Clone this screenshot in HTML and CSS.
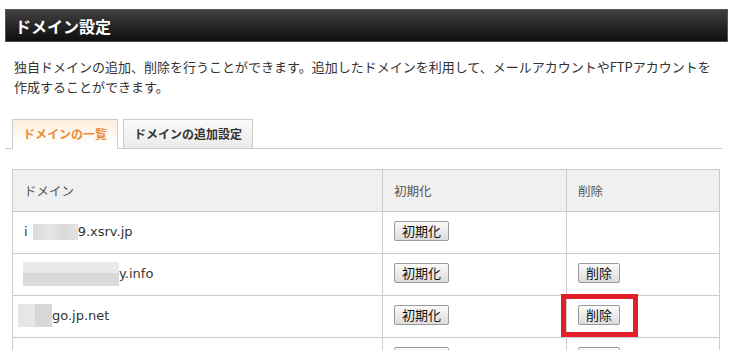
FILE: index.html
```html
<!DOCTYPE html>
<html lang="ja">
<head>
<meta charset="utf-8">
<title>ドメイン設定</title>
<link rel="stylesheet" href="styles.css">
</head>
<body>
<div class="page">
  <h1 class="title-bar">ドメイン設定</h1>
  <p class="desc">独自ドメインの追加、削除を行うことができます。追加したドメインを利用して、メールアカウントやFTPアカウントを作成することができます。</p>
  <div class="tabs">
    <div class="tab tab-active">ドメインの一覧</div>
    <div class="tab">ドメインの追加設定</div>
  </div>
  <table class="domains">
    <thead>
      <tr>
        <th class="col-domain">ドメイン</th>
        <th class="col-init">初期化</th>
        <th class="col-del">削除</th>
      </tr>
    </thead>
    <tbody>
      <tr>
        <td><div class="cell domain">i<span class="mask mask-1"></span>9.xsrv.jp</div></td>
        <td><div class="cell"><button class="btn btn-init">初期化</button></div></td>
        <td></td>
      </tr>
      <tr>
        <td><div class="cell domain"><span class="mask mask-2"></span>y.info</div></td>
        <td><div class="cell"><button class="btn btn-init">初期化</button></div></td>
        <td><div class="cell"><button class="btn btn-del">削除</button></div></td>
      </tr>
      <tr>
        <td><div class="cell domain"><span class="mask mask-3"></span>go.jp.net</div></td>
        <td><div class="cell"><button class="btn btn-init">初期化</button></div></td>
        <td class="marked"><div class="cell"><button class="btn btn-del">削除</button></div><span class="highlight"></span></td>
      </tr>
      <tr>
        <td></td>
        <td><div class="cell"><button class="btn btn-init">初期化</button></div></td>
        <td><div class="cell"><button class="btn btn-del">削除</button></div></td>
      </tr>
    </tbody>
  </table>
</div>
</body>
</html>
```
FILE: styles.css
```css
html, body {
  margin: 0;
  padding: 0;
  background: #ffffff;
}
body {
  font-family: "Noto Sans CJK JP", "DejaVu Sans", sans-serif;
  color: #333333;
  overflow: hidden;
}
.page {
  padding: 9px 0 0 0;
}
.title-bar {
  margin: 0 0 0 5px;
  width: 723px;
  height: 33px;
  box-sizing: border-box;
  padding-left: 9px;
  font-size: 16px;
  font-weight: bold;
  line-height: 32px;
  color: #ffffff;
  background: linear-gradient(#404040, #0e0e0e);
  border: 1px solid #555555;
}
.desc {
  margin: 15px 0 0 14px;
  width: 708px;
  font-size: 13px;
  line-height: 20px;
  color: #333333;
}
.tabs {
  display: flex;
  gap: 5px;
  margin: 22px 0 0 5px;
  padding-left: 7px;
  width: 710px;
  border-bottom: 1px solid #cccccc;
  height: 29px;
}
.tab {
  box-sizing: border-box;
  height: 29px;
  border: 1px solid #cccccc;
  border-bottom: none;
  font-size: 12px;
  font-weight: bold;
  line-height: 28px;
  text-align: center;
  color: #333333;
  background: linear-gradient(#fafafa, #ebebeb);
  width: 130px;
}
.tab-active {
  width: 106px;
  color: #e98d36;
  height: 30px;
  background: linear-gradient(#fdeedd, #ffffff 85%);
}
.domains {
  margin: 20px 0 0 12px;
  width: 707px;
  border-collapse: collapse;
  table-layout: fixed;
}
.domains th,
.domains td {
  border: 1px solid #cccccc;
  height: 41px;
  padding: 0 0 0 11px;
  text-align: left;
  vertical-align: middle;
  box-sizing: content-box;
}
.domains th {
  background: #f0f0f0;
  font-size: 12.5px;
  font-weight: normal;
  color: #555555;
}
.col-domain { width: 358px; }
.col-init { width: 172px; }
.col-del { width: 141px; }
.cell {
  display: flex;
  align-items: center;
  height: 41px;
}
.domain {
  font-family: "DejaVu Sans", "Noto Sans CJK JP", sans-serif;
  font-size: 13px;
  color: #333333;
  padding-bottom: 2px;
  box-sizing: border-box;
}
.mask {
  display: block;
  flex: none;
  background: linear-gradient(90deg, #dcdcdc, #e6e6e6 40%, #d9d9d9 70%, #e4e4e4);
}
.mask-1 {
  width: 45px;
  height: 16px;
  margin-left: 5px;
}
.mask-2 {
  width: 96px;
  height: 24px;
  margin-left: -1px;
  background: linear-gradient(#e9e9e9 45%, #d6d6d6 45%, #dddddd);
}
.mask-3 {
  width: 34px;
  height: 23px;
  margin-left: -6px;
  background: linear-gradient(90deg, #e6e6e6 50%, #d7d7d7 50%);
}
.btn {
  display: block;
  box-sizing: border-box;
  height: 20px;
  padding: 0;
  margin-bottom: 3px;
  font-family: "Noto Sans CJK JP", sans-serif;
  font-size: 13px;
  line-height: 18px;
  color: #111111;
  background: linear-gradient(#fbfbfb, #dcdcdc);
  border: 1px solid #9a9a9a;
  border-radius: 2px;
}
.btn-init { width: 55px; }
.btn-del { width: 42px; }
.marked {
  position: relative;
}
.highlight {
  position: absolute;
  left: -6px;
  top: -2px;
  width: 77px;
  height: 43px;
  box-sizing: border-box;
  border: 5px solid #e3202a;
}
```
